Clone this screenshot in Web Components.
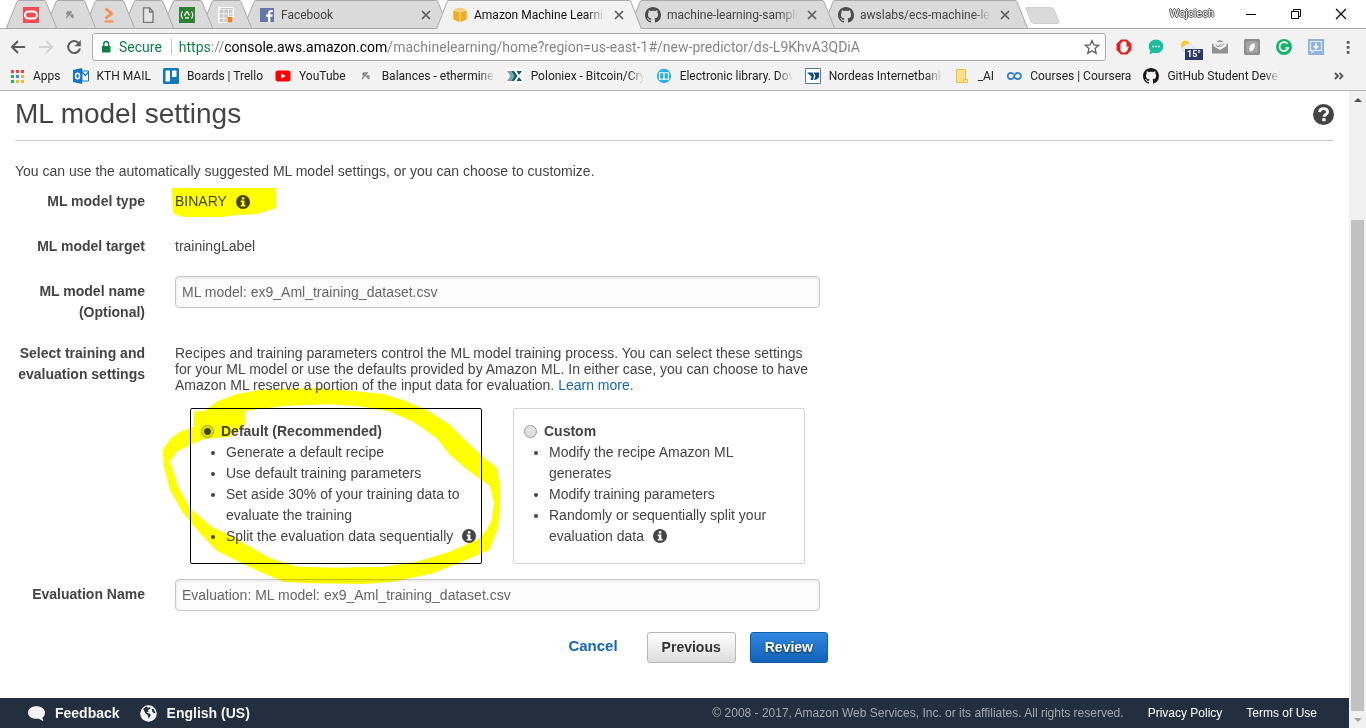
<!DOCTYPE html>
<html lang="en">
<head>
<meta charset="utf-8">
<title>Amazon Machine Learning</title>
<style>
html, body { margin: 0; height: 100%; }
body { font-family: "Liberation Sans", Arial, sans-serif; font-size: 14px; line-height: 21px; color: #444; background: #fff; }
</style>
</head>
<body>
<browser-window>
  <tab-strip slot="tabs">
    <browser-tab slot="pinned" pinned icon="oracle"></browser-tab>
    <browser-tab slot="pinned" pinned icon="pick"></browser-tab>
    <browser-tab slot="pinned" pinned icon="prompt"></browser-tab>
    <browser-tab slot="pinned" pinned icon="file"></browser-tab>
    <browser-tab slot="pinned" pinned icon="camp"></browser-tab>
    <browser-tab slot="pinned" pinned icon="cubes"></browser-tab>
    <browser-tab icon="facebook">Facebook</browser-tab>
    <browser-tab icon="aws" active>Amazon Machine Learning</browser-tab>
    <browser-tab icon="github">machine-learning-samples</browser-tab>
    <browser-tab icon="github">awslabs/ecs-machine-learning</browser-tab>
  </tab-strip>
  <tool-bar slot="tools"></tool-bar>
  <bookmark-bar slot="bookmarks">
    <bookmark-item icon="apps">Apps</bookmark-item>
    <bookmark-item icon="outlook">KTH MAIL</bookmark-item>
    <bookmark-item icon="trello">Boards | Trello</bookmark-item>
    <bookmark-item icon="youtube">YouTube</bookmark-item>
    <bookmark-item icon="pick" long>Balances - ethermine.org</bookmark-item>
    <bookmark-item icon="poloniex" long>Poloniex - Bitcoin/Crypto</bookmark-item>
    <bookmark-item icon="library" long>Electronic library. Download</bookmark-item>
    <bookmark-item icon="nordea" long>Nordeas Internetbanken</bookmark-item>
    <bookmark-item icon="folder">_AI</bookmark-item>
    <bookmark-item icon="coursera">Courses | Coursera</bookmark-item>
    <bookmark-item icon="github-dark" long>GitHub Student Developer</bookmark-item>
  </bookmark-bar>
  <settings-page>
    <form-row label="ML model type"><marked-value>BINARY</marked-value></form-row>
    <form-row label="ML model target">trainingLabel</form-row>
    <text-field label="ML model name (Optional)" value="ML model: ex9_Aml_training_dataset.csv"></text-field>
    <form-row label="Select training and evaluation settings"><training-options></training-options></form-row>
    <text-field label="Evaluation Name" value="Evaluation: ML model: ex9_Aml_training_dataset.csv"></text-field>
  </settings-page>
  <page-footer slot="footer"></page-footer>
  <scroll-rail slot="scroll"></scroll-rail>
</browser-window>

<script>
const OCTO = 'M8 0C3.58 0 0 3.58 0 8c0 3.54 2.29 6.53 5.47 7.59.4.07.55-.17.55-.38 0-.19-.01-.82-.01-1.49-2.01.37-2.53-.49-2.69-.94-.09-.23-.48-.94-.82-1.13-.28-.15-.68-.52-.01-.53.63-.01 1.08.58 1.23.82.72 1.21 1.87.87 2.33.66.07-.52.28-.87.51-1.07-1.78-.2-3.64-.89-3.64-3.95 0-.87.31-1.59.82-2.15-.08-.2-.36-1.02.08-2.12 0 0 .67-.21 2.2.82.64-.18 1.32-.27 2-.27s1.36.09 2 .27c1.53-1.04 2.2-.82 2.2-.82.44 1.1.16 1.92.08 2.12.51.56.82 1.27.82 2.15 0 3.07-1.87 3.75-3.65 3.95.29.25.54.73.54 1.48 0 1.07-.01 1.93-.01 2.2 0 .21.15.46.55.38A8.01 8.01 0 0 0 16 8c0-4.42-3.58-8-8-8z';
const ICONS = {
  oracle: '<rect width="16" height="16" fill="#f64b54"/><rect x="2" y="4.500" width="12" height="7" rx="3.500" fill="none" stroke="#fff" stroke-width="2"/>',
  pick: '<path d="M5 5h5M5 5v3M5 5l6 6M4 11l5-6M9 8h2v3" fill="none" stroke="#8c8c8c" stroke-width="1.3"/>',
  prompt: '<path d="M4.500 1.500L10.500 6.500 4.500 11.500" fill="none" stroke="#ff8a50" stroke-width="2.800"/><path d="M3.500 13.500h9v2h-9z" fill="#ff8a50"/>',
  file: '<path d="M3.500.8h6.200L13 4.600v10.700H3.500zM9.500 1v4H13" fill="#e4e4e4" stroke="#777" stroke-width="1.300"/>',
  camp: '<rect width="16" height="16" fill="#2f8030"/><path d="M3.500 4.500Q1 8 3.500 11.500M12.500 4.500q2.500 3.500 0 7" fill="none" stroke="#fff" stroke-width="1.200"/><path d="M8 4c.3 1.800 2.300 2.700 2.300 4.600M8 4C7.500 6 5.700 6.800 5.700 8.700M6 10.800h4" fill="none" stroke="#fff" stroke-width="1.300"/>',
  cubes: '<rect width="16" height="16" fill="#fff"/><path d="M1.500 3h4v3.500h-4zM6.200 3h4v3.500h-4zM11 3h3.500v3.500H11zM1.500 7.200h4v3.500h-4zM6.200 7.200h4v3.500h-4zM1.500 11.500h4V15h-4zM6.200 11.500h2.500V15H6.200zM11 7.200h3.500v2H11zM3 1h12v1.400H2z" fill="#c9c9c9"/><path d="M9.500 10h5v5.500h-5z" fill="#ff7a1c"/>',
  facebook: '<rect x="1" y="1" width="14" height="14" fill="#6377ae"/><path d="M9 15V9.700H7V7.600h2V6c0-2 1.200-3 3-3h1.800v2H12.500c-.9 0-1.200.4-1.200 1.200v1.400h2.400l-.3 2.100h-2.100V15z" fill="#fff"/>',
  aws: '<path d="M8 .8l6.700 2.200v9.600L8 15.300l-6.700-2.700V3z" fill="#f3ac22"/><path d="M1.300 3L8 4.800 14.700 3 8 .8z" fill="#f9cd71"/><path d="M8 4.800v10.500M1 3l7 1.800L15 3" fill="none" stroke="#fff8e5" stroke-width=".7"/>',
  github: `<path d="${OCTO}" fill="#4b4b4b"/>`,
  'github-dark': `<path d="${OCTO}" fill="#1b1817"/>`,
  apps: '<path d="M2 2h3v3H2zM7 2h3v3H7zM12 2h3v3h-3z" fill="#e8463a"/><path d="M2 7h3v3H2zM2 12h3v3H2z" fill="#3cab58"/><path d="M7 7h3v3H7z" fill="#3b86e8"/><path d="M12 7h3v3h-3zM7 12h3v3H7zM12 12h3v3h-3z" fill="#f5b52c"/>',
  outlook: '<path d="M9 3h6.500v10H9z" fill="#fff" stroke="#0f75c8"/><path d="M9 4l3.500 3.500L15.500 4" fill="none" stroke="#0f75c8" stroke-width="1.200"/><path d="M0 2l9-2v16l-9-2z" fill="#0f75c8"/><ellipse cx="4.600" cy="8" rx="2" ry="2.800" fill="none" stroke="#fff" stroke-width="1.500"/>',
  trello: '<rect width="16" height="16" rx="1.500" fill="#0f79bf"/><rect x="2.500" y="2.500" width="4.500" height="11" rx=".6" fill="#fff"/><rect x="9" y="2.500" width="4.500" height="6.500" rx=".6" fill="#fff"/>',
  youtube: '<rect x=".5" y="2.500" width="15" height="11" rx="2.800" fill="#f00"/><path d="M6.300 5.400v5.200L10.800 8z" fill="#fff"/>',
  poloniex: '<rect width="16" height="16" fill="#f8f8f8"/><path d="M0 3h3.500l4 5-4 5H0l3.500-5z" fill="#6aa6a8"/><path d="M4 3h3l3.500 5L7 13H4l3.500-5z" fill="#155a60"/><path d="M9.500 3H15l-3 4zM9.500 13H15l-3-4z" fill="#23565b"/>',
  library: '<circle cx="8" cy="8" r="7.200" fill="#29b1e3"/><path d="M3.500 5Q6 4 8 5q2-1 4.500 0v6.500Q10 10.500 8 11.500q-2-1-4.500 0zM8 5v6.500" fill="none" stroke="#fff" stroke-width="1.200"/>',
  nordea: '<path d="M.5.500h15v15H.5z" fill="#fff" stroke="#5a7c9c"/><path d="M2 4.500h5.500l1.500 3-1 4.500H5.500l1-3.500zM8.500 4.500H14V9q-1.500 3-5 3l1.500-4z" fill="#0d4a80"/>',
  folder: '<path d="M2.500 1.500h9v10h2v3h-11z" fill="#fbe08a" stroke="#edc14c"/><path d="M9.500 14.500v-3h4" fill="none" stroke="#edc14c"/>',
  coursera: '<path d="M7.600 6.600a3.100 3.100 0 1 0 0 2.800L9 6.600a3.100 3.100 0 1 1 0 2.800" fill="none" stroke="#3c86ca" stroke-width="2"/>',
  back: '<path d="M15 8H2.500M8 2L2 8l6 6" fill="none" stroke="#5a5a5a" stroke-width="2"/>',
  forward: '<path d="M1 8h12.500M8 2l6 6-6 6" fill="none" stroke="#d3d3d3" stroke-width="2"/>',
  reload: '<path d="M12.800 4.200A6 6 0 1 0 14 9.500" fill="none" stroke="#5a5a5a" stroke-width="2"/><path d="M14.800 1v6.200H8.600z" fill="#5a5a5a"/>',
  lock: '<path d="M4 7h8.500v6.500H4z" fill="#0b8043"/><path d="M5.800 7V4.900a2.400 2.400 0 0 1 4.800 0V7" fill="none" stroke="#0b8043" stroke-width="1.400"/>',
  star: '<path d="M8 1.600l1.900 4.400 4.800.4-3.600 3.200 1.100 4.700L8 11.800l-4.200 2.500 1.100-4.700L1.300 6.400l4.800-.4z" fill="none" stroke="#5a5a5a" stroke-width="1.300"/>',
  hand: '<path d="M5 .5h6L15.500 5v6L11 15.500H5L.5 11V5z" fill="#e0201f"/><path d="M4.500 8.500V4.500q.7-1 1.400 0V3q.8-1 1.500 0v-.6q.8-1 1.500 0V3q.9-1 1.600 0v6l1-1.500q1.200-.5 1.200.5L11 12q-1 1.500-3.500 1.500-3 0-3-3z" fill="#fff"/>',
  chat: '<path d="M8 .5a7.300 6.900 0 0 1 0 13.800c-1 0-2-.2-2.800-.5L1.500 15.500l.9-3.700A6.800 6.800 0 0 1 .7 7.400 7.300 6.900 0 0 1 8 .5z" fill="#17bd9d"/><path d="M4.300 6.800h1.600v1.400H4.300zM7.200 6.800h1.600v1.400H7.200zM10.100 6.800h1.600v1.400h-1.600z" fill="#fff"/>',
  weather: '<circle cx="5.500" cy="6" r="4.500" fill="#ffc928"/><path d="M4 12.500a2.800 2.800 0 0 1 .6-5.500A4 4 0 0 1 12 7.400a2.700 2.700 0 0 1 1.500 5.100z" fill="#e9edf2" stroke="#c8cdd5" stroke-width=".5"/>',
  mail: '<path d="M0 5l8-4 8 4v9.500H0z" fill="#929292"/><path d="M1.500 3h13v4L8 11 1.500 7z" fill="#f4f4f4"/><path d="M4 5.500l2 2.500 3-3.500M7.500 7l1 1 3.500-3.500" fill="none" stroke="#888"/>',
  leaf: '<rect width="16" height="16" rx="1.500" fill="#8e8e8e"/><rect x="2" y="2" width="12" height="12" rx="3" fill="#a4a4a4"/><path d="M10.500 4q1.500 7-4.500 8.500Q3.500 6 10.500 4z" fill="#fff"/>',
  grammar: '<circle cx="8" cy="8" r="8" fill="#18b46b"/><path d="M11.500 4.700A4.500 4.500 0 1 0 12.300 9H9.500" fill="none" stroke="#fff" stroke-width="1.700"/>',
  download: '<rect width="16" height="16" fill="#8fb0e2"/><path d="M2.500 2.500h11v9H6l-2 2v-2H2.500z" fill="none" stroke="#e9f0fb" stroke-width="1.200"/><path d="M8 4v5M5.700 7L8 9.500 10.300 7" fill="none" stroke="#fff" stroke-width="1.500"/>',
  more: '<path d="M6.700 2h2.800v2.800H6.700zM6.700 7h2.800v2.800H6.700zM6.700 12h2.800v2.800H6.700z" fill="#5a5a5a"/>',
  overflow: '<path d="M4 5l3 3-3 3M8.500 5l3 3-3 3" fill="none" stroke="#555" stroke-width="1.800"/>',
  close: '<path d="M4 4l8 8M12 4l-8 8" stroke="#5c5c5c" stroke-width="1.700"/>',
  minimize: '<path d="M3 8.500h10" stroke="#000"/>',
  restore: '<path d="M5.500 5.500v-2h7v7h-2M3.500 5.500h7v7h-7z" fill="none" stroke="#000"/>',
  exit: '<path d="M3 3l10 10M13 3L3 13" stroke="#000" stroke-width="1.200"/>',
  info: '<circle cx="8" cy="8" r="8" fill="#444"/><path d="M6.600 2.500h3v2.600h-3zM5.400 6.300h4.200v5h1.300v1.900H5.400v-1.900h1.300V8.200H5.400z" fill="#fff"/>',
  help: '<circle cx="8" cy="8" r="8" fill="#444"/><path d="M5 6.200C5.100 4.300 6.300 3.500 8 3.500s3.100.9 3.100 2.500c0 2-2.700 2-2.700 3.700" fill="none" stroke="#fff" stroke-width="2.200"/><path d="M7.100 10.800h2.500v2.300H7.100z" fill="#fff"/>',
  bubble: '<path d="M8 1.200c4.500 0 8 2.500 8 6 0 2.100-1 3.600-2.400 4.700l.9 3.500-4.300-2.500C4.300 13.500 0 11 0 7.200c0-3.500 3.500-6 8-6z" fill="#f4f4f4"/>',
  globe: '<circle cx="8" cy="8" r="7.800" fill="#f4f4f4"/><path d="M3 3.500l3-2 1.500 1.200 2-.6.500 1.200-2.500 1.500.7 1.200-2 1 3 1.200 1 1.500-2 3-1.200-3.500-2-1.500zM11 3.500l2 .5 1.500 3.500-1.500.2-1.500-1.500z" fill="#232f3e"/>'
};

function define(name, css, html, setup) {
  const template = document.createElement('template');
  template.innerHTML = `<style>:host,*{box-sizing:border-box}button{font:inherit;color:inherit;background:none;border:0;padding:0;margin:0}a{color:inherit;text-decoration:none}${css}</style>${html}`;
  customElements.define(name, class extends HTMLElement {
    connectedCallback() {
      if (this.shadowRoot) return;
      const content = template.content.cloneNode(true);
      if (setup) setup(this, content);
      this.attachShadow({ mode: 'open' }).append(content);
    }
  });
}

define('ui-icon', `:host{display:block;flex:none;width:16px;height:16px}svg{display:block;width:100%;height:100%}`,
  `<svg viewBox="0 0 16 16" aria-hidden="true"></svg>`,
  (el, root) => { root.querySelector('svg').innerHTML = ICONS[el.getAttribute('name')] || ''; });

define('browser-window', `
:host{display:flex;flex-direction:column;min-height:100vh}
.chrome{background:#f2f2f2;border-bottom:1px solid #b3b3b3;font-family:Roboto,"Open Sans",sans-serif;font-size:12px;line-height:16px;color:#222}
.view{flex:1;display:flex}
.page{flex:1;min-width:0;display:flex;flex-direction:column}
.page ::slotted(settings-page){flex:1}`,
`<div class="chrome"><slot name="tabs"></slot><slot name="tools"></slot><slot name="bookmarks"></slot></div>
<div class="view"><div class="page"><slot></slot><slot name="footer"></slot></div><slot name="scroll"></slot></div>`);

define('tab-strip', `
:host{display:flex;height:29px;background:#fff;border-bottom:1px solid #a9a9a9;padding-left:6px}
.pinned,.tabs{display:flex}
.tabs{margin-left:3px}
.new{width:36px;height:17px;margin:7px 0 0 10px;flex:none}
.new svg{display:block}
.window{margin-left:auto;display:flex;align-items:center;gap:29px;padding-right:17px;height:27px}
.user{font-size:11px;color:#fff;text-shadow:1px 0 #555,-1px 0 #555,0 1px #555,0 -1px #555}`,
`<div class="pinned"><slot name="pinned"></slot></div><div class="tabs"><slot></slot></div>
<button class="new" aria-label="New tab"><svg width="36" height="17" viewBox="0 0 36 17"><path d="M1.500.500H26q2 0 3 2l5 12q.500 2-1 2H9q-2 0-3-2L1 2Q.500.500 1.500.500z" fill="#dadada" stroke="#cfcfcf"/></svg></button>
<div class="window"><span class="user">Wojciech</span><button aria-label="Minimize"><ui-icon name="minimize"></ui-icon></button><button aria-label="Restore"><ui-icon name="restore"></ui-icon></button><button aria-label="Close window"><ui-icon name="exit"></ui-icon></button></div>`,
(el) => { [...el.children].forEach((tab, i, all) => { tab.style.zIndex = tab.hasAttribute('active') ? 50 : all.length - i; }); });

define('browser-tab', `
:host{display:flex;position:relative;width:206px;height:28px;margin-right:-13px;--fill:#dadada;flex:none;color:#444}
:host([pinned]){width:51px;margin-right:-12px}
:host([active]){--fill:#f2f2f2;height:29px;color:#111}
.edge{flex:none;width:13px;height:100%;fill:var(--fill);stroke:#a9a9a9}
.edge .fill{stroke:none}
.body{flex:1;min-width:0;display:flex;align-items:center;gap:6px;background:var(--fill);border-top:1px solid #a9a9a9;padding:1px 2px 0 3px}
:host([active]) .body{padding-bottom:1px}
:host([pinned]) .body{padding:1px 0 0 4px}
.title{flex:1;overflow:hidden;white-space:nowrap;-webkit-mask-image:linear-gradient(to right,#000 86%,transparent);mask-image:linear-gradient(to right,#000 86%,transparent)}
:host([pinned]) .title,:host([pinned]) button{display:none}`,
`<svg class="edge" viewBox="0 0 13 28" preserveAspectRatio="none"><path class="fill" d="M0 28L11 1.500Q12 0 13 0V28z"/><path d="M.500 28L11 2Q11.500.500 13 .500" fill="none"/></svg>
<div class="body"><ui-icon></ui-icon><span class="title"><slot></slot></span><button aria-label="Close tab"><ui-icon name="close"></ui-icon></button></div>
<svg class="edge" viewBox="0 0 13 28" preserveAspectRatio="none"><path class="fill" d="M13 28L2 1.500Q1 0 0 0V28z"/><path d="M12.500 28L2 2Q1.500.500 0 .500" fill="none"/></svg>`,
(el, root) => root.querySelector('.body > ui-icon').setAttribute('name', el.getAttribute('icon')));

define('tool-bar', `
:host{display:flex;align-items:center;height:36px;padding:0 10px}
.nav{display:flex;gap:12px;margin-right:10px}
.box{flex:1;min-width:0;display:flex;align-items:center;height:28px;background:#fff;border:1px solid #a9a9a9;border-radius:3px;padding:0 5px;font-size:14px}
.secure{color:#0b8043;margin:0 9px 0 5px}
.rule{width:1px;height:16px;background:#c4c4c4;margin-right:7px}
input{flex:1;min-width:0;border:0;padding:0;height:24px;outline:0;font:inherit;color:transparent;background:linear-gradient(to right,#0b8043 32px,#888 32px,#888 46px,#000 46px,#000 209px,#808080 209px);-webkit-background-clip:text;background-clip:text}
.ext{display:flex;gap:16px;margin-left:10px}
.temp{position:relative}
.badge{position:absolute;left:5px;top:10px;padding:0 2px;height:11px;font-size:9px;line-height:11px;font-weight:700;color:#fff;background:#2b3a68}`,
`<div class="nav"><button aria-label="Back"><ui-icon name="back"></ui-icon></button><button aria-label="Forward"><ui-icon name="forward"></ui-icon></button><button aria-label="Reload"><ui-icon name="reload"></ui-icon></button></div>
<div class="box"><ui-icon name="lock"></ui-icon><span class="secure">Secure</span><span class="rule"></span><input type="text" aria-label="Address" value="https://console.aws.amazon.com/machinelearning/home?region=us-east-1#/new-predictor/ds-L9KhvA3QDiA"><button aria-label="Bookmark this page"><ui-icon name="star"></ui-icon></button></div>
<div class="ext"><button aria-label="Blocker"><ui-icon name="hand"></ui-icon></button><button aria-label="Chat"><ui-icon name="chat"></ui-icon></button><button class="temp" aria-label="Weather"><ui-icon name="weather"></ui-icon><span class="badge">15°</span></button><button aria-label="Mail"><ui-icon name="mail"></ui-icon></button><button aria-label="Leaf"><ui-icon name="leaf"></ui-icon></button><button aria-label="Grammar"><ui-icon name="grammar"></ui-icon></button><button aria-label="Save"><ui-icon name="download"></ui-icon></button><button aria-label="Menu"><ui-icon name="more"></ui-icon></button></div>`);

define('bookmark-bar', `
:host{display:flex;align-items:center;height:25px;padding:0 19px 3px 9px}
.items{display:flex;flex:1;min-width:0;gap:12px;overflow:hidden}`,
`<nav class="items" aria-label="Bookmarks"><slot></slot></nav><button aria-label="More bookmarks"><ui-icon name="overflow"></ui-icon></button>`);

define('bookmark-item', `
:host{display:block;flex:none}
a{display:flex;align-items:center;gap:8px}
.text{white-space:nowrap;overflow:hidden}
:host([long]) .text{width:113px;-webkit-mask-image:linear-gradient(to right,#000 86%,transparent);mask-image:linear-gradient(to right,#000 86%,transparent)}`,
`<a href="#"><ui-icon></ui-icon><span class="text"><slot></slot></span></a>`,
(el, root) => root.querySelector('ui-icon').setAttribute('name', el.getAttribute('icon')));

define('settings-page', `
:host{display:block;padding:6px 15px 35px}
header{display:flex;justify-content:space-between;align-items:center;padding-bottom:9px;border-bottom:1px solid #ccc}
h1{margin:0;font-size:28px;line-height:34px;font-weight:400}
header ui-icon{width:21px;height:21px}
p{margin:20px 0 4px}
form{max-width:813px}
.rows{display:flex;flex-direction:column;gap:15px}
.actions{display:flex;justify-content:flex-end;align-items:flex-start;margin-top:21px;font-weight:700}
.cancel{font-size:15px;line-height:28px;color:#1166bb;margin-right:29px}
.actions button{height:31px;padding:0 14px;border:1px solid #b7b7b7;border-radius:3px;color:#333;background:linear-gradient(#fff,#dcdcdc)}
.actions .primary{margin-left:14px;color:#fff;border-color:#0f5cad;background:linear-gradient(#2f86df,#1262b8);text-shadow:0 1px 2px #123}`,
`<header><h1>ML model settings</h1><button aria-label="Help"><ui-icon name="help"></ui-icon></button></header>
<p>You can use the automatically suggested ML model settings, or you can choose to customize.</p>
<form><div class="rows"><slot></slot></div>
<div class="actions"><a class="cancel" href="#">Cancel</a><button type="button">Previous</button><button type="button" class="primary">Review</button></div></form>`);

const ROW = `
:host{display:grid;grid-template-columns:130px minmax(0,645px);column-gap:30px;min-height:30px}
.label{padding-top:5px;text-align:right;font-weight:700}`;

define('form-row', ROW + `.value{padding-top:5px}`,
`<span class="label"></span><div class="value"><slot></slot></div>`,
(el, root) => { root.querySelector('.label').textContent = el.getAttribute('label'); });

define('text-field', ROW + `
input{width:100%;height:32px;border:1px solid #c8c8c8;border-radius:4px;padding:0 6px;font:inherit;color:#666;background:#fcfcfc;box-shadow:inset 0 1px 3px #e2e2e2}`,
`<label class="label" for="field"></label><input id="field" type="text">`,
(el, root) => {
  root.querySelector('label').textContent = el.getAttribute('label');
  root.querySelector('input').setAttribute('value', el.getAttribute('value'));
});

define('marked-value', `
:host{display:flex;align-items:center;gap:9px;position:relative}
ui-icon{width:14px;height:14px}
.marker{position:absolute;left:-3px;top:-3px;mix-blend-mode:multiply;pointer-events:none}`,
`<slot></slot><ui-icon name="info"></ui-icon>
<svg class="marker" width="104" height="29" viewBox="0 0 104 29" aria-hidden="true"><path d="M0 0H104V20L98 22 85 26 66 27 48 29H12L5 27 1 25V13H0z" fill="#ff0"/></svg>`);

define('training-options', `
:host{display:block}
p{margin:2px 0 15px;line-height:16px}
p a{color:#1166bb}
.cards{display:grid;grid-template-columns:1fr 1fr;gap:31px;margin:0 15px;position:relative}
.card{border:1px solid #d5d5d5;border-radius:2px;padding:12px 4px 16px 10px}
.card.chosen{border-color:#000}
.card.custom{padding-right:16px}
label{display:flex;align-items:center;gap:7px;font-weight:700}
input{appearance:none;margin:0;width:13px;height:13px;border:1px solid #999;border-radius:50%;background:linear-gradient(#e6e6e6,#dcdcdc)}
input:checked{background:radial-gradient(circle,#444 0 3px,#e4e4e4 4px)}
ul{margin:0;padding-left:25px}
li ui-icon{display:inline-block;width:14px;height:14px;margin-left:9px;vertical-align:-2px}
.marker{position:absolute;left:-40px;top:-28px;mix-blend-mode:multiply;pointer-events:none}`,
`<p>Recipes and training parameters control the ML model training process. You can select these settings for your ML model or use the defaults provided by Amazon ML. In either case, you can choose to have Amazon ML reserve a portion of the input data for evaluation. <a href="#">Learn more.</a></p>
<div class="cards">
<div class="card chosen"><label><input type="radio" name="mode" checked>Default (Recommended)</label>
<ul><li>Generate a default recipe</li><li>Use default training parameters</li><li>Set aside 30% of your training data to evaluate the training</li><li>Split the evaluation data sequentially<ui-icon name="info"></ui-icon></li></ul></div>
<div class="card custom"><label><input type="radio" name="mode">Custom</label>
<ul><li>Modify the recipe Amazon ML generates</li><li>Modify training parameters</li><li>Randomly or sequentially split your evaluation data<ui-icon name="info"></ui-icon></li></ul></div>
<svg class="marker" width="360" height="210" viewBox="0 0 1080 630" aria-hidden="true"><path fill="#ff0" fill-rule="evenodd" d="M38 210L60 178 90 155 132 140V95L165 92 200 65 260 42 330 30 400 26 500 24 600 32 700 42 765 62 840 95 900 135 950 185 1010 240 1040 262 1050 310V380L1045 440 1030 480 1018 510 960 535 850 580 730 605 640 612 480 610 400 605 340 580 280 552 200 512 150 460 100 400 60 330 42 260zM60 245L80 215 120 195 160 178 240 170 265 150 285 135V93L400 78 540 73 640 80 720 95 790 125 860 175 900 225 960 275 1020 318 1032 370 1025 420 1010 450 985 478 900 515 800 545 700 560 560 563 440 560 360 535 300 500 230 462 185 440 120 385 85 320z"/></svg>
</div>`);

define('page-footer', `
:host{display:flex;align-items:center;justify-content:space-between;height:30px;padding:0 32px 0 28px;background:#232f3e;color:#f4f4f4}
.left,.right{display:flex;align-items:center}
.left{gap:20px;font-weight:700}
.left button{display:flex;align-items:center;gap:10px}
.left ui-icon{width:17px;height:17px}
.right{gap:24px;font-size:12px}
.legal{color:#a3a8ad}
.right a{color:#fff}`,
`<div class="left"><button><ui-icon name="bubble"></ui-icon>Feedback</button><button><ui-icon name="globe"></ui-icon>English (US)</button></div>
<div class="right"><span class="legal">© 2008 - 2017, Amazon Web Services, Inc. or its affiliates. All rights reserved.</span><a href="#">Privacy Policy</a><a href="#">Terms of Use</a></div>`);

define('scroll-rail', `
:host{display:flex;flex-direction:column;flex:none;width:17px;background:#f1f1f1}
.cap{height:17px;display:grid;place-items:center;flex:none}
.gap{flex:112}
.thumb{flex:491;margin:0 2px;background:#c1c1c1}`,
`<div class="cap"><svg width="8" height="4"><path d="M0 4L4 0l4 4z" fill="#505050"/></svg></div><div class="gap"></div><div class="thumb"></div><div class="cap"><svg width="8" height="4"><path d="M0 0h8L4 4z" fill="#a3a3a3"/></svg></div>`);
</script>
</body>
</html>
